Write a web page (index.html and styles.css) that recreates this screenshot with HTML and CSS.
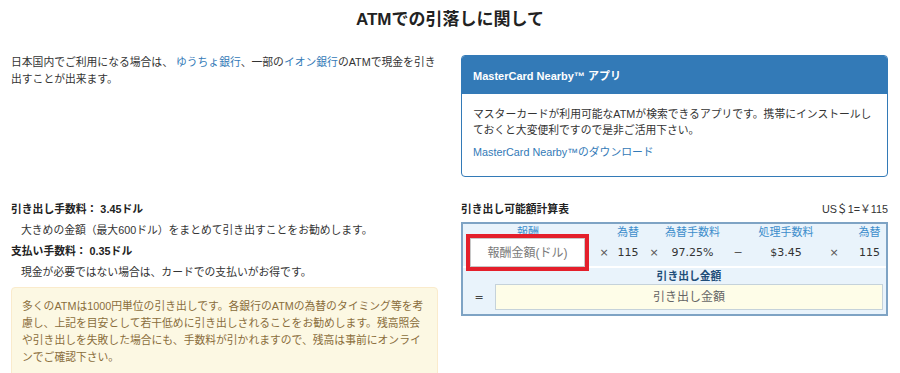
FILE: index.html
```html
<!DOCTYPE html>
<html lang="ja">
<head>
<meta charset="utf-8">
<title>ATMでの引落しに関して</title>
<link rel="stylesheet" href="styles.css">
</head>
<body>
<h1 class="title">ATMでの引落しに関して</h1>
<div class="layout">
  <p class="intro">日本国内でご利用になる場合は、 <a href="#">ゆうちょ銀行</a>、一部の<a href="#">イオン銀行</a>のATMで現金を引き<br>出すことが出来ます。</p>

  <div class="panel">
    <div class="panel-head">MasterCard Nearby™ アプリ</div>
    <div class="panel-body">
      <p class="panel-text">マスターカードが利用可能なATMが検索できるアプリです。携帯にインストールし<br>ておくと大変便利ですので是非ご活用下さい。</p>
      <a class="panel-link" href="#">MasterCard Nearby™のダウンロード</a>
    </div>
  </div>

  <div class="fees-col">
    <dl class="fees">
      <dt>引き出し手数料： 3.45ドル</dt>
      <dd>大きめの金額（最大600ドル）をまとめて引き出すことをお勧めします。</dd>
      <dt>支払い手数料： 0.35ドル</dt>
      <dd>現金が必要ではない場合は、カードでの支払いがお得です。</dd>
    </dl>
    <div class="alert">多くのATMは1000円単位の引き出しです。各銀行のATMの為替のタイミング等を考<br>慮し、上記を目安として若干低めに引き出しされることをお勧めします。残高照会<br>や引き出しを失敗した場合にも、手数料が引かれますので、残高は事前にオンライ<br>ンでご確認下さい。</div>
  </div>

  <div class="calc-col">
    <div class="calc-head">
      <span class="calc-title">引き出し可能額計算表</span>
      <span class="calc-rate">US＄1=￥115</span>
    </div>
    <div class="calc">
      <div class="calc-top">
        <span class="lbl c1">報酬</span>
        <span class="lbl c3">為替</span>
        <span class="lbl c5">為替手数料</span>
        <span class="lbl c7">処理手数料</span>
        <span class="lbl c9">為替</span>
        <input class="calc-input" type="text" placeholder="報酬金額(ドル)">
        <span class="op">×</span>
        <span class="val">115</span>
        <span class="op">×</span>
        <span class="val">97.25%</span>
        <span class="op">−</span>
        <span class="val">$3.45</span>
        <span class="op">×</span>
        <span class="val">115</span>
      </div>
      <div class="calc-bottom">
        <span class="result-lbl">引き出し金額</span>
        <span class="eq">=</span>
        <div class="result">引き出し金額</div>
      </div>
    </div>
  </div>
</div>
</body>
</html>
```
FILE: styles.css
```css
* { box-sizing: border-box; }
html, body { margin: 0; padding: 0; background: #fff; }
body {
  font-family: "Liberation Sans", "Noto Sans CJK JP", sans-serif;
  font-size: 10.8px;
  color: #333;
  width: 900px;
  overflow: hidden;
}
a { color: #337ab7; text-decoration: none; }

.title {
  margin: 0;
  padding-top: 10px;
  font-size: 17px;
  line-height: 20px;
  font-weight: bold;
  color: #222;
  text-align: center;
}

.layout {
  display: grid;
  grid-template-columns: 427px 427px;
  column-gap: 23px;
  row-gap: 22px;
  margin-top: 24px;
  padding-left: 11px;
  align-items: start;
}

.intro {
  margin: 0;
  line-height: 17px;
  white-space: nowrap;
}

.panel {
  margin-top: 1px;
  border: 1px solid #337ab7;
  border-radius: 4px;
  overflow: hidden;
}
.panel-head {
  height: 38px;
  display: flex;
  align-items: center;
  padding: 0 11px;
  background: #337ab7;
  color: #fff;
  font-weight: bold;
  font-size: 11px;
}
.panel-body {
  padding: 12px 11px 16px;
  line-height: 16px;
}
.panel-text {
  margin: 0 0 6px;
  white-space: nowrap;
}
.panel-link { display: block; }

.fees { margin: 0; }
.fees dt {
  font-weight: bold;
  line-height: 21px;
  color: #222;
}
.fees dd {
  margin: 0 0 0 10px;
  line-height: 21px;
}
.alert {
  margin-top: 4px;
  padding: 10px 5px 10px 10px;
  border: 1px solid #faebcc;
  border-radius: 4px;
  background: #fcf8e3;
  color: #8a6d3b;
  line-height: 17px;
  white-space: nowrap;
}

.calc-head {
  display: flex;
  justify-content: space-between;
  line-height: 21px;
  margin-bottom: 2px;
}
.calc-title { font-weight: bold; color: #222; }

.calc {
  border: 2px solid #7ea3c4;
  background: #e9f3fb;
}
.calc-top {
  display: grid;
  grid-template-columns: 130px 22px 26px 26px 51px 40px 56px 40px 31px;
  grid-template-rows: 16px 26px;
  border-bottom: 2px solid #fff;
  align-items: center;
  justify-items: center;
  text-align: center;
}
.lbl {
  grid-row: 1;
  color: #3c8dcb;
  font-size: 11px;
  line-height: 16px;
  white-space: nowrap;
}
.c1 { grid-column: 1; }
.c3 { grid-column: 3; }
.c5 { grid-column: 5; }
.c7 { grid-column: 7; }
.c9 { grid-column: 9; }

.calc-input {
  grid-row: 2;
  grid-column: 1;
  align-self: start;
  justify-self: start;
  position: relative;
  z-index: 1;
  width: 123px;
  height: 37px;
  margin: -6px 0 0 3px;
  border: 4px solid #e41f2b;
  box-shadow: inset 0 0 0 1px #c8c8c8;
  background: #fff;
  font-family: "Liberation Sans", "Noto Sans CJK JP", sans-serif;
  font-size: 12px;
  text-align: center;
  color: #333;
  padding: 0;
  outline: none;
}
.calc-input::placeholder { color: #7a7a7a; opacity: 1; }

.op, .val {
  grid-row: 2;
  font-family: "DejaVu Sans", "Noto Sans CJK JP", sans-serif;
  font-size: 11px;
  line-height: 26px;
  white-space: nowrap;
}
.op { color: #555; }
.val { color: #333; }

.calc-bottom {
  display: grid;
  grid-template-columns: 32px 1fr;
  grid-template-rows: 16px 26px;
  padding: 0 3px 4px 0;
  align-items: center;
}
.result-lbl {
  grid-column: 2;
  text-align: center;
  font-weight: bold;
  color: #1f4e79;
  line-height: 16px;
}
.eq {
  grid-column: 1;
  grid-row: 2;
  text-align: center;
  font-family: "DejaVu Sans", sans-serif;
  font-size: 11px;
  color: #444;
}
.result {
  grid-column: 2;
  grid-row: 2;
  height: 26px;
  line-height: 24px;
  border: 1px solid #c5d2da;
  background: #fefde8;
  text-align: center;
  font-size: 12px;
  color: #666;
}
```
